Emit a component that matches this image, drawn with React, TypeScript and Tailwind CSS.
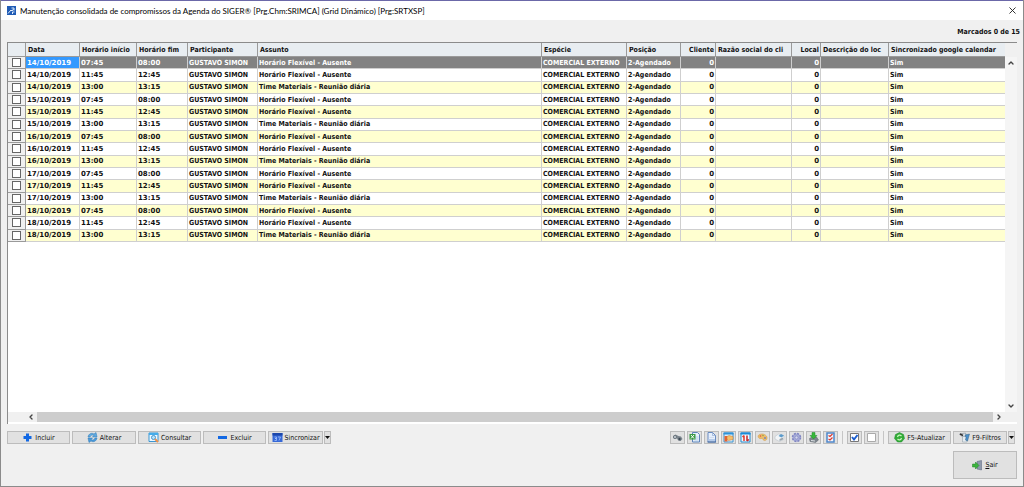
import type { ReactNode } from "react";
import { ChevronDown, ChevronLeft, ChevronRight, ChevronUp, X } from "lucide-react";
import clsx from "clsx";

const days = ["14/10/2019", "15/10/2019", "16/10/2019", "17/10/2019", "18/10/2019"];
const slots = [
  { start: "07:45", end: "08:00", subject: "Horário Flexível - Ausente" },
  { start: "11:45", end: "12:45", subject: "Horário Flexível - Ausente" },
  { start: "13:00", end: "13:15", subject: "Time Materiais - Reunião diária" },
];
const rows = days.flatMap((date) => slots.map((slot) => ({ date, ...slot })));

const columns = [
  { label: "Data", width: "w-[54px]", digits: true },
  { label: "Horário início", width: "w-[57px]", digits: true },
  { label: "Horário fim", width: "w-[51px]", digits: true },
  { label: "Participante", width: "w-[70px]" },
  { label: "Assunto", width: "" },
  { label: "Espécie", width: "w-[85px]" },
  { label: "Posição", width: "w-[54px]" },
  { label: "Cliente", width: "w-[35px]", digits: true, right: true },
  { label: "Razão social do cli", width: "w-[76px]" },
  { label: "Local", width: "w-[29px]", digits: true, right: true },
  { label: "Descrição do loc", width: "w-[68px]" },
  { label: "Sincronizado google calendar", width: "w-[116px]" },
];

const buttonBase = "flex items-center justify-center border border-[#bcbcbc] bg-[#e1e1e1] hover:bg-[#e5f1fb]";

/** Small captioned button of the bottom bar. */
function BarButton({ width, icon, children }: { width: string; icon: ReactNode; children: ReactNode }) {
  return (
    <button type="button" className={clsx(buttonBase, "h-[13px] gap-[2px] whitespace-nowrap", width)}>
      {icon}
      <span>{children}</span>
    </button>
  );
}

function MenuArrow({ label }: { label: string }) {
  return (
    <button type="button" aria-label={label} className={clsx(buttonBase, "h-[13px] w-[7px]")}>
      <svg viewBox="0 0 5 3" className="h-[3px] w-[5px] shrink-0">
        <path d="M0 0h5L2.5 3z" fill="#111" />
      </svg>
    </button>
  );
}

function IconButton({ label, children }: { label: string; children: ReactNode }) {
  return (
    <button type="button" aria-label={label} className={clsx(buttonBase, "h-[13px] w-[15px]")}>
      <Glyph>{children}</Glyph>
    </button>
  );
}

function Glyph({ children }: { children: ReactNode }) {
  return (
    <svg viewBox="0 0 22 22" className="h-[11px] w-[11px] shrink-0" fill="none" aria-hidden>
      {children}
    </svg>
  );
}

const plusIcon = <path d="M8 3h6v5h5v6h-5v5H8v-5H3V8h5z" fill="#1268e3" />;
const minusIcon = <path d="M2 8h18v6H2z" fill="#1268e3" />;
const editIcon = (
  <>
    <path d="M2 10C3 3 10 1 14 4l4-3 2 9h-9l3-3c-4-2-7 0-8 3z" fill="#5fa9e0" stroke="#2f78b5" />
    <path d="M20 12c-1 7-8 9-12 6l-4 3-2-9h9l-3 3c4 2 7 0 8-3z" fill="#4a9adb" stroke="#2f78b5" />
  </>
);
const viewIcon = (
  <>
    <path d="M2 2h18v17H2z" fill="#eef8ff" stroke="#3b96d2" strokeWidth="2" />
    <path d="M2 2h18v4H2z" fill="#45acea" />
    <circle cx="11" cy="11" r="4" fill="#b9e3fa" stroke="#4795cc" strokeWidth="2" />
    <path d="m14 14 6 6" stroke="#ed914b" strokeWidth="4" />
  </>
);
const calendarIcon = (
  <>
    <path d="M1 2h20v18H1z" fill="#3769d7" />
    <path d="M1 2h20v5H1z" fill="#1c47ab" />
    <path d="M5 10h4v3H6h3v4H5M12 10h5l-3 7" stroke="#a7c4ff" strokeWidth="1.5" />
  </>
);
const refreshIcon = (
  <>
    <path d="m11 1 8 4 2 8-6 7H7l-6-7 2-8z" fill="#32ad37" stroke="#18842b" />
    <path d="M7 10c1-4 5-5 8-2M15 12c-1 4-5 5-8 2" stroke="#c9f5bd" strokeWidth="2.5" />
  </>
);
const filterIcon = (
  <>
    <path d="m1 4 12-2 2 6-7 3z" fill="#dce3e8" stroke="#737f88" />
    <path d="M7 9h9v11H7z" fill="#e6ecf0" stroke="#8794a0" />
    <path d="m12 6 9-2-2 7-2 7-4-2 1-5z" fill="#4a90cc" stroke="#356386" />
    <path d="m2 4 6 3" stroke="#333" strokeWidth="3" />
  </>
);

const tools = [
  {
    label: "Localizar",
    icon: (
      <>
        <path d="m2 8 5-3 6 3 5 1 3 5-4 4-5-2-2-3-5 1-3-2z" fill="#7d868e" />
        <circle cx="6" cy="10" r="3" fill="#ced6dc" stroke="#5b646c" strokeWidth="1.5" />
        <circle cx="15" cy="14" r="3" fill="#3b4853" stroke="#818b93" />
      </>
    ),
  },
  {
    label: "Exportar para planilha",
    icon: (
      <>
        <path d="M7 1h10l4 4v15H7z" fill="#e8f1fb" stroke="#5f84ba" strokeWidth="2" />
        <path d="M11 10h8M11 14h8M11 18h8" stroke="#8fb1d8" />
        <path d="M1 4h12v11H1z" fill="#3b9a43" />
        <path d="m4 6 6 7m0-7-6 7" stroke="#fff" strokeWidth="2" />
      </>
    ),
  },
  {
    label: "Documento",
    icon: (
      <>
        <path d="M4 1h9l6 6v13H4z" fill="#e6effc" stroke="#6a8cc2" strokeWidth="2" />
        <path d="M13 1v6h6" stroke="#6a8cc2" />
        <path d="M7 11h9" stroke="#bccde8" />
        <path d="M5 14h13v4H5z" fill="#b5cbea" />
        <path d="M3 20h17" stroke="#42679b" strokeWidth="2" />
      </>
    ),
  },
  {
    label: "Layout",
    icon: (
      <>
        <path d="M2 2h18v18H2z" fill="#dceefb" stroke="#3d94d0" strokeWidth="2" />
        <path d="M1 1h20v4H1z" fill="#2d93d9" />
        <path d="M3 8h6v11H3z" fill="#e8622f" />
        <path d="M8 9l4-2 8 2v6l-9 2-3-3z" fill="#f6c06c" stroke="#c27a33" />
      </>
    ),
  },
  {
    label: "Ordenar",
    icon: (
      <>
        <path d="M2 2h18v18H2z" fill="#f4fbff" stroke="#218bd0" strokeWidth="2" />
        <path d="M1 1h20v4H1z" fill="#198bd8" />
        <path d="M8 7v11M5 10l3-3" stroke="#e23b2e" strokeWidth="3" />
        <path d="M14 7v11m4-3-4 3" stroke="#c4282b" strokeWidth="3" />
      </>
    ),
  },
  {
    label: "Cores",
    icon: (
      <>
        <path d="M2 8c2-5 12-6 17 0 3 5 0 10-5 9-3-1-1-4-4-4-5 1-8-1-8-5z" fill="#edbc68" stroke="#cf9a4e" />
        <circle cx="7" cy="8" r="1.5" fill="#de5442" />
        <circle cx="12" cy="7" r="1.5" fill="#8aa34a" />
        <circle cx="16" cy="12" r="2" fill="#7a86b8" />
      </>
    ),
  },
  {
    label: "Imprimir",
    icon: (
      <>
        <path d="m2 9 7-5 11 4-1 7-8 4-9-5z" fill="#f2f5f7" stroke="#b3bcc4" />
        <path d="m9 8 5-4 6 3-5 4z" fill="#5c9bcb" />
        <path d="m11 14 7-3v4l-7 3z" fill="#9aa5ae" />
      </>
    ),
  },
  {
    label: "Configurar",
    icon: (
      <>
        <circle cx="11" cy="11" r="8" fill="#a6abd9" />
        <circle cx="11" cy="11" r="8" stroke="#8186c2" strokeWidth="3" strokeDasharray="4 2.3" />
        <circle cx="11" cy="11" r="3" fill="#d5d8ee" stroke="#7378b5" />
      </>
    ),
  },
  {
    label: "Salvar",
    icon: (
      <>
        <path d="m3 13 5-3h9l4 6-6 5-11-2z" fill="#7d858c" stroke="#5c656c" />
        <path d="m6 17 8 1" stroke="#dce1e5" strokeWidth="2" />
        <path d="M8 1h6v6h4l-7 7-7-7h4z" fill="#37b83a" stroke="#1f8a28" />
      </>
    ),
  },
  {
    label: "Tarefas",
    icon: (
      <>
        <path d="M4 2h14v18H4z" fill="#f2f7fe" stroke="#4f87c9" strokeWidth="3" />
        <path d="m7 7 3 2 5-5M7 14l3 2 5-5" stroke="#dc3b30" strokeWidth="2.5" />
      </>
    ),
  },
];

function Separator() {
  return <span className="mx-[2px] h-[13px] w-px bg-[#c6c6c6]" aria-hidden />;
}

function TitleBar() {
  return (
    <header className="flex h-5 items-center justify-between border-t border-[#6b68a8] bg-white pl-[6px] pr-[5px]">
      <div className="flex items-center gap-1">
        <svg viewBox="0 0 18 18" className="h-[9px] w-[9px]" aria-hidden>
          <path d="M0 0h18v18H0z" fill="#1f5bb5" />
          <path d="m2 15 6-7 2 2 3-4M9 4h5v5M11 16v-4h4" fill="none" stroke="#e3effd" strokeWidth="2" />
        </svg>
        <h1 className="whitespace-nowrap font-[Lato,sans-serif] text-[8px] text-black">
          Manutenção consolidada de compromissos da Agenda do SIGER® [Prg.Chm:SRIMCA] (Grid Dinámico) [Prg:SRTXSP]
        </h1>
      </div>
      <button type="button" aria-label="Fechar">
        <X className="h-[11px] w-[11px] text-[#222]" strokeWidth={2} />
      </button>
    </header>
  );
}

function AppointmentsTable() {
  return (
    <table className="h-[199px] w-full table-fixed border-separate border-spacing-0 whitespace-nowrap text-left">
      <thead>
        <tr className="h-[14px] bg-[#e8edf1]">
          <th className="w-[18px] border-b border-r border-[#9a9a9a] p-0" aria-label="Marcar" />
          {columns.map((column) => (
            <th
              key={column.label}
              scope="col"
              className={clsx(
                "overflow-hidden border-b border-r border-[#9a9a9a] py-0 pl-[2px] pr-px last:border-r-0",
                column.width,
                column.right && "text-right",
              )}
            >
              {column.label}
            </th>
          ))}
        </tr>
      </thead>
      <tbody>
        {rows.map((row, i) => {
          const cells = [
            row.date,
            row.start,
            row.end,
            "GUSTAVO SIMON",
            row.subject,
            "COMERCIAL EXTERNO",
            "2-Agendado",
            "0",
            "",
            "0",
            "",
            "Sim",
          ];
          const selected = i === 0;
          return (
            <tr
              key={`${row.date} ${row.start}`}
              className={clsx(selected ? "bg-[#828282] text-white" : i % 2 === 0 ? "bg-[#ffffd0]" : "bg-white")}
            >
              <td className="border-b border-r border-[#9a9a9a] bg-[#f0f0f0] p-0">
                <input
                  type="checkbox"
                  aria-label={`Marcar ${row.date} ${row.start}`}
                  className="mx-auto block h-[9px] w-[9px] appearance-none border border-[#666] bg-white checked:bg-[#1268e3]"
                />
              </td>
              {cells.map((cell, c) => (
                <td
                  key={columns[c].label}
                  className={clsx(
                    "overflow-hidden border-b border-r border-[#cfcfcf] py-0 pl-px pr-px last:border-r-0",
                    columns[c].digits && "font-['DejaVu_Sans',sans-serif]",
                    columns[c].right && "text-right",
                    selected && c === 0 && "bg-[#3399ff]",
                  )}
                >
                  {cell}
                </td>
              ))}
            </tr>
          );
        })}
      </tbody>
    </table>
  );
}

export default function App() {
  return (
    <main className="flex min-h-screen flex-col border-x border-b border-[#8b8b8b] bg-[#f0f0f0] font-['DejaVu_Sans_Condensed','DejaVu_Sans',sans-serif] text-[7px] leading-[10px] text-[#111]">
      <TitleBar />
      <p className="flex h-[22px] items-center justify-end pr-[3px] pt-[2px] font-bold">Marcados 0 de {rows.length}</p>

      <section className="mx-[6px] flex flex-1 flex-col border-l border-t border-[#8b8b8b] bg-white font-bold">
        <div className="flex flex-1">
          <div className="min-w-0 flex-1">
            <AppointmentsTable />
          </div>
          <div className="flex w-3 flex-col">
            <div className="h-[14px] bg-[#f0f0f0]" />
            <div className="flex flex-1 flex-col items-center justify-between bg-[#f5f5f5] py-[2px]">
              <ChevronUp className="h-2 w-2 text-[#444]" strokeWidth={4} />
              <ChevronDown className="h-2 w-2 text-[#444]" strokeWidth={4} />
            </div>
          </div>
        </div>
        <div className="mb-[2px] flex h-[10px] items-center bg-[#f0f0f0] pl-[19px] pr-[14px]">
          <ChevronLeft className="h-2 w-2 text-[#444]" strokeWidth={4} />
          <div className="mx-[2px] h-full flex-1 bg-[#cdcdcd]" />
          <ChevronRight className="h-2 w-2 text-[#444]" strokeWidth={4} />
        </div>
      </section>

      <footer className="px-[6px] pb-[7px] pt-[7px]">
        <div className="flex justify-between">
          <div className="flex gap-[2px]">
            <BarButton width="w-[63px]" icon={<Glyph>{plusIcon}</Glyph>}>
              Incluir
            </BarButton>
            <BarButton width="w-[64px]" icon={<Glyph>{editIcon}</Glyph>}>
              Alterar
            </BarButton>
            <BarButton width="w-[63px]" icon={<Glyph>{viewIcon}</Glyph>}>
              Consultar
            </BarButton>
            <BarButton width="w-[63px]" icon={<Glyph>{minusIcon}</Glyph>}>
              Excluir
            </BarButton>
            <div className="flex gap-px">
              <BarButton width="w-[55px]" icon={<Glyph>{calendarIcon}</Glyph>}>
                Sincronizar
              </BarButton>
              <MenuArrow label="Opções de sincronização" />
            </div>
          </div>

          <div className="flex gap-[2px] pr-[2px]">
            {tools.map((tool) => (
              <IconButton key={tool.label} label={tool.label}>
                {tool.icon}
              </IconButton>
            ))}
            <Separator />
            <IconButton label="Marcar todos">
              <path d="M3 3h16v16H3z" fill="#fff" stroke="#777" strokeWidth="2" />
              <path d="m6 10 4 5 7-9" stroke="#1d5fd0" strokeWidth="4" />
            </IconButton>
            <IconButton label="Desmarcar todos">
              <path d="M3 3h16v16H3z" fill="#fff" stroke="#aaa" strokeWidth="2" />
            </IconButton>
            <Separator />
            <BarButton width="w-[63px]" icon={<Glyph>{refreshIcon}</Glyph>}>
              F5-Atualizar
            </BarButton>
            <div className="flex gap-px">
              <BarButton width="w-[54px]" icon={<Glyph>{filterIcon}</Glyph>}>
                F9-Filtros
              </BarButton>
              <MenuArrow label="Opções de filtro" />
            </div>
          </div>
        </div>
        <div className="mt-[7px] flex justify-end">
          <button type="button" className={clsx(buttonBase, "h-7 w-16 gap-[2px]")}>
            <Glyph>
              <path d="M10 3l9-2v19l-9-2z" fill="#8f9aad" stroke="#54617a" />
              <path d="M1 8h6V4l7 7-7 7v-4H1z" fill="#3cb43e" stroke="#1f8527" />
            </Glyph>
            <span>
              <u>S</u>air
            </span>
          </button>
        </div>
      </footer>
    </main>
  );
}
